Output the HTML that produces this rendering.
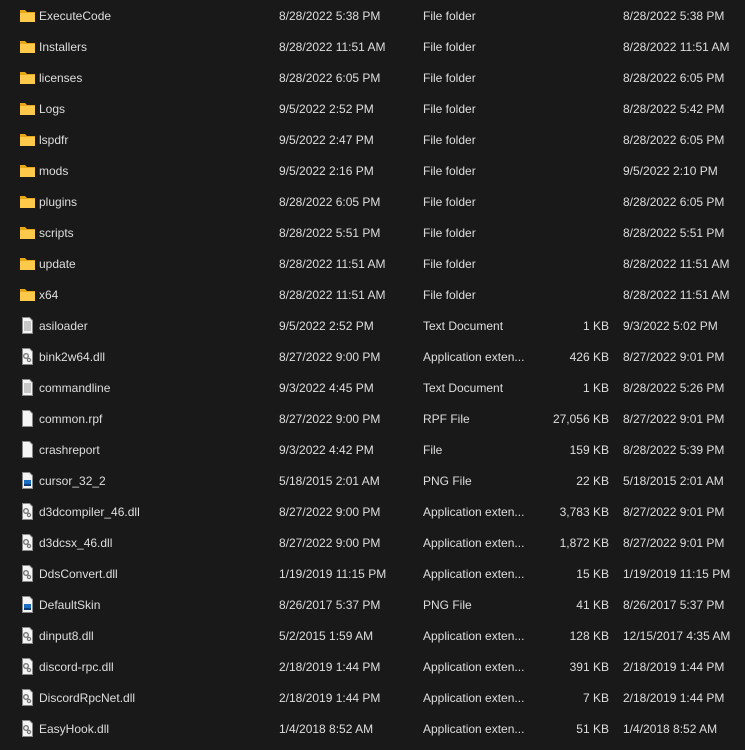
<!DOCTYPE html>
<html><head><meta charset="utf-8"><style>
body{margin:0;background:#191919;width:745px;height:750px;overflow:hidden;font-family:"Liberation Sans",sans-serif;font-size:12px;color:#dedede}
.r{position:absolute;left:0;height:31px;width:745px}
.r span{position:absolute;top:9px;white-space:nowrap}
.n{left:39px}.d{left:279px}.t{left:423px}.s{right:136px}.m{left:623px}
.i{position:absolute;left:19px;top:7px}
</style></head><body>
<script>
const F='<svg class="i" width="17" height="17" viewBox="0 0 17 17"><path d="M1 3h5l2 2h8v9H1z" fill="#e8a718"/><path d="M1 6h15v9H1z" fill="#fcc94a"/></svg>';
const T='<svg class="i" width="17" height="17" viewBox="0 0 17 17"><path d="M3.5 .5h7l3 3v13h-10z" fill="#f4f4f4" stroke="#888"/><path d="M5 5h7M5 7h7M5 9h7M5 11h7M5 13h7" stroke="#999"/></svg>';
const B='<svg class="i" width="17" height="17" viewBox="0 0 17 17"><path d="M3.5 .5h7l3 3v13h-10z" fill="#f4f4f4" stroke="#888"/></svg>';
const D='<svg class="i" width="17" height="17" viewBox="0 0 17 17"><path d="M3.5 .5h7l3 3v13h-10z" fill="#f4f4f4" stroke="#888"/><circle cx="7" cy="8" r="2.3" fill="none" stroke="#777" stroke-width="1.4"/><circle cx="10" cy="12" r="1.6" fill="none" stroke="#777" stroke-width="1.2"/></svg>';
const P='<svg class="i" width="17" height="17" viewBox="0 0 17 17"><path d="M3.5 .5h7l3 3v13h-10z" fill="#f4f4f4" stroke="#888"/><rect x="5" y="8" width="7" height="6" fill="#1b6ec2"/><rect x="5" y="12" width="7" height="2" fill="#0a3d7a"/></svg>';
const rows=[
[F,'ExecuteCode','8/28/2022 5:38 PM','File folder','','8/28/2022 5:38 PM'],
[F,'Installers','8/28/2022 11:51 AM','File folder','','8/28/2022 11:51 AM'],
[F,'licenses','8/28/2022 6:05 PM','File folder','','8/28/2022 6:05 PM'],
[F,'Logs','9/5/2022 2:52 PM','File folder','','8/28/2022 5:42 PM'],
[F,'lspdfr','9/5/2022 2:47 PM','File folder','','8/28/2022 6:05 PM'],
[F,'mods','9/5/2022 2:16 PM','File folder','','9/5/2022 2:10 PM'],
[F,'plugins','8/28/2022 6:05 PM','File folder','','8/28/2022 6:05 PM'],
[F,'scripts','8/28/2022 5:51 PM','File folder','','8/28/2022 5:51 PM'],
[F,'update','8/28/2022 11:51 AM','File folder','','8/28/2022 11:51 AM'],
[F,'x64','8/28/2022 11:51 AM','File folder','','8/28/2022 11:51 AM'],
[T,'asiloader','9/5/2022 2:52 PM','Text Document','1 KB','9/3/2022 5:02 PM'],
[D,'bink2w64.dll','8/27/2022 9:00 PM','Application exten...','426 KB','8/27/2022 9:01 PM'],
[T,'commandline','9/3/2022 4:45 PM','Text Document','1 KB','8/28/2022 5:26 PM'],
[B,'common.rpf','8/27/2022 9:00 PM','RPF File','27,056 KB','8/27/2022 9:01 PM'],
[B,'crashreport','9/3/2022 4:42 PM','File','159 KB','8/28/2022 5:39 PM'],
[P,'cursor_32_2','5/18/2015 2:01 AM','PNG File','22 KB','5/18/2015 2:01 AM'],
[D,'d3dcompiler_46.dll','8/27/2022 9:00 PM','Application exten...','3,783 KB','8/27/2022 9:01 PM'],
[D,'d3dcsx_46.dll','8/27/2022 9:00 PM','Application exten...','1,872 KB','8/27/2022 9:01 PM'],
[D,'DdsConvert.dll','1/19/2019 11:15 PM','Application exten...','15 KB','1/19/2019 11:15 PM'],
[P,'DefaultSkin','8/26/2017 5:37 PM','PNG File','41 KB','8/26/2017 5:37 PM'],
[D,'dinput8.dll','5/2/2015 1:59 AM','Application exten...','128 KB','12/15/2017 4:35 AM'],
[D,'discord-rpc.dll','2/18/2019 1:44 PM','Application exten...','391 KB','2/18/2019 1:44 PM'],
[D,'DiscordRpcNet.dll','2/18/2019 1:44 PM','Application exten...','7 KB','2/18/2019 1:44 PM'],
[D,'EasyHook.dll','1/4/2018 8:52 AM','Application exten...','51 KB','1/4/2018 8:52 AM']];
let h='';rows.forEach((r,k)=>{h+=`<div class="r" style="top:${k*31}px">${r[0]}<span class="n">${r[1]}</span><span class="d">${r[2]}</span><span class="t">${r[3]}</span><span class="s">${r[4]}</span><span class="m">${r[5]}</span></div>`});
document.write(h);
</script>
</body></html>
